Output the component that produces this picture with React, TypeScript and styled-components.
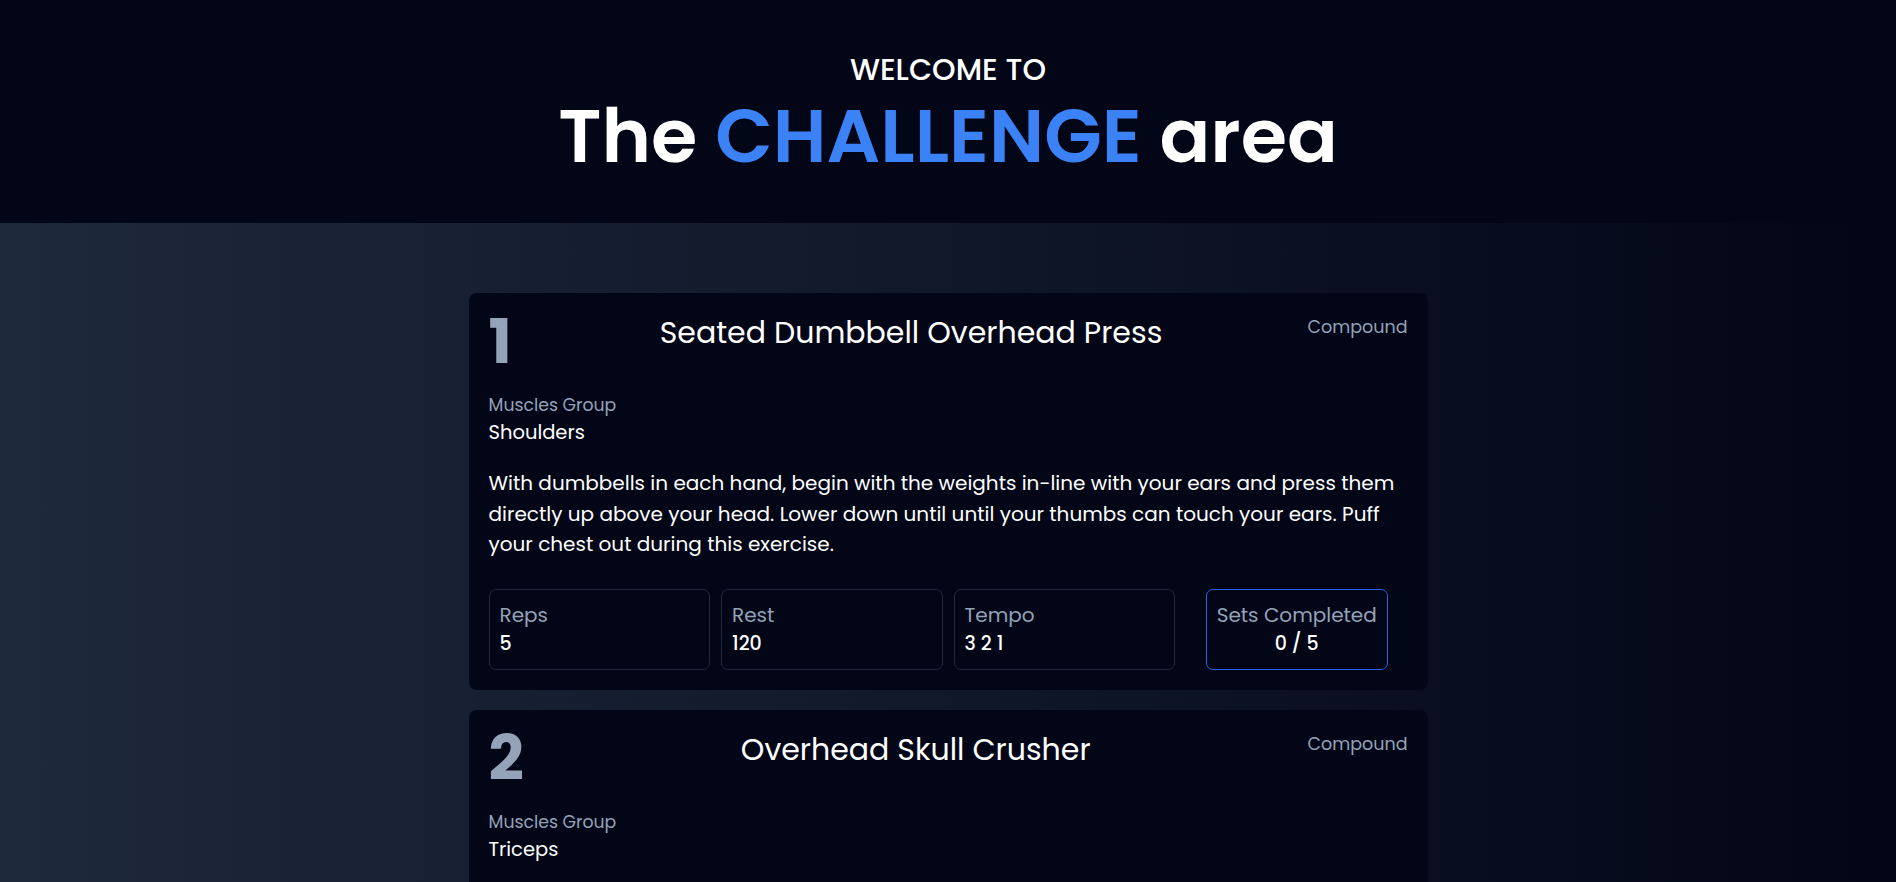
import React from "react";
import styled, { createGlobalStyle } from "styled-components";

const Global = createGlobalStyle`
  * { box-sizing: border-box; }
  html, body { margin: 0; padding: 0; background: #020617; }
  body { font-family: "Poppins", "Open Sans", "Noto Sans", sans-serif; color: #fff; }
  h1, h2, h3, p { margin: 0; }
`;

const Header = styled.header`
  height: 223px;
  background: #020617;
  display: flex;
  flex-direction: column;
  align-items: center;
  padding-top: 50px;
`;

const Welcome = styled.p`
  font-size: 30px;
  font-weight: 500;
  line-height: 40px;
  color: #fff;
`;

const Title = styled.h1`
  font-size: 75px;
  font-weight: 600;
  line-height: 92px;
  color: #fff;
`;

const Accent = styled.span`
  color: #3b82f6;
`;

const Main = styled.main`
  background: linear-gradient(to right, #1e293b, #020617);
  padding: 70px 0 60px;
  display: flex;
  flex-direction: column;
  align-items: center;
  gap: 20px;
  min-height: 700px;
`;

const Card = styled.section`
  width: 959px;
  background: #020617;
  border-radius: 8px;
  padding: 20px;
  display: flex;
  flex-direction: column;
`;

const TopRow = styled.div`
  display: flex;
  align-items: flex-start;
`;

const Num = styled.span`
  font-size: 62px;
  font-weight: 700;
  line-height: 58px;
  color: #94a3b8;
  min-width: 26px;
`;

const ExName = styled.h2`
  flex: 1;
  text-align: center;
  font-size: 30px;
  font-weight: 400;
  line-height: 40px;
  color: #fff;
`;

const Kind = styled.span`
  font-size: 17.5px;
  line-height: 28px;
  color: #94a3b8;
`;

const Label = styled.p`
  margin-top: 21px;
  font-size: 17.3px;
  line-height: 26px;
  color: #94a3b8;
`;

const Group = styled.p`
  font-size: 19.5px;
  line-height: 30px;
  color: #fff;
`;

const Desc = styled.p`
  margin-top: 20px;
  font-size: 20px;
  line-height: 30.5px;
  color: #fff;
`;

const Stats = styled.div`
  margin-top: 29px;
  display: grid;
  grid-template-columns: repeat(4, 1fr);
  gap: 11px;
`;

const StatBox = styled.div`
  height: 81px;
  border: 1px solid #1e293b;
  border-radius: 7px;
  padding: 10px 10px;
  display: flex;
  flex-direction: column;
`;

const StatLabel = styled.span`
  font-size: 20px;
  line-height: 30px;
  color: #94a3b8;
`;

const StatValue = styled.span`
  font-size: 19px;
  font-weight: 500;
  line-height: 28px;
  color: #fff;
`;

const SetsCell = styled.div`
  display: flex;
  justify-content: center;
`;

const SetsButton = styled.button`
  height: 81px;
  background: transparent;
  border: 1px solid #2563eb;
  border-radius: 7px;
  padding: 10px 10px;
  display: flex;
  flex-direction: column;
  align-items: center;
  font-family: inherit;
  cursor: pointer;
`;

type Exercise = {
  name: string;
  type: string;
  muscles: string;
  description: string;
  reps: string;
  rest: string;
  tempo: string;
  sets: number;
};

const exercises: Exercise[] = [
  {
    name: "Seated Dumbbell Overhead Press",
    type: "Compound",
    muscles: "Shoulders",
    description:
      "With dumbbells in each hand, begin with the weights in-line with your ears and press them directly up above your head. Lower down until until your thumbs can touch your ears. Puff your chest out during this exercise.",
    reps: "5",
    rest: "120",
    tempo: "3 2 1",
    sets: 5,
  },
  {
    name: "Overhead Skull Crusher",
    type: "Compound",
    muscles: "Triceps",
    description:
      "Lying on a bench, hold the weight above your head with straight arms. Bend at the elbows to lower the weight behind your head, then extend back up to the starting position.",
    reps: "10",
    rest: "90",
    tempo: "2 1 2",
    sets: 4,
  },
];

function ExerciseCard({ ex, index }: { ex: Exercise; index: number }) {
  return (
    <Card>
      <TopRow>
        <Num>{index + 1}</Num>
        <ExName>{ex.name}</ExName>
        <Kind>{ex.type}</Kind>
      </TopRow>
      <Label>Muscles Group</Label>
      <Group>{ex.muscles}</Group>
      <Desc>{ex.description}</Desc>
      <Stats>
        <StatBox>
          <StatLabel>Reps</StatLabel>
          <StatValue>{ex.reps}</StatValue>
        </StatBox>
        <StatBox>
          <StatLabel>Rest</StatLabel>
          <StatValue>{ex.rest}</StatValue>
        </StatBox>
        <StatBox>
          <StatLabel>Tempo</StatLabel>
          <StatValue>{ex.tempo}</StatValue>
        </StatBox>
        <SetsCell>
          <SetsButton>
            <StatLabel>Sets Completed</StatLabel>
            <StatValue>0 / {ex.sets}</StatValue>
          </SetsButton>
        </SetsCell>
      </Stats>
    </Card>
  );
}

export default function App() {
  return (
    <>
      <Global />
      <Header>
        <Welcome>WELCOME TO</Welcome>
        <Title>
          The <Accent>CHALLENGE</Accent> area
        </Title>
      </Header>
      <Main>
        {exercises.map((ex, i) => (
          <ExerciseCard key={ex.name} ex={ex} index={i} />
        ))}
      </Main>
    </>
  );
}
